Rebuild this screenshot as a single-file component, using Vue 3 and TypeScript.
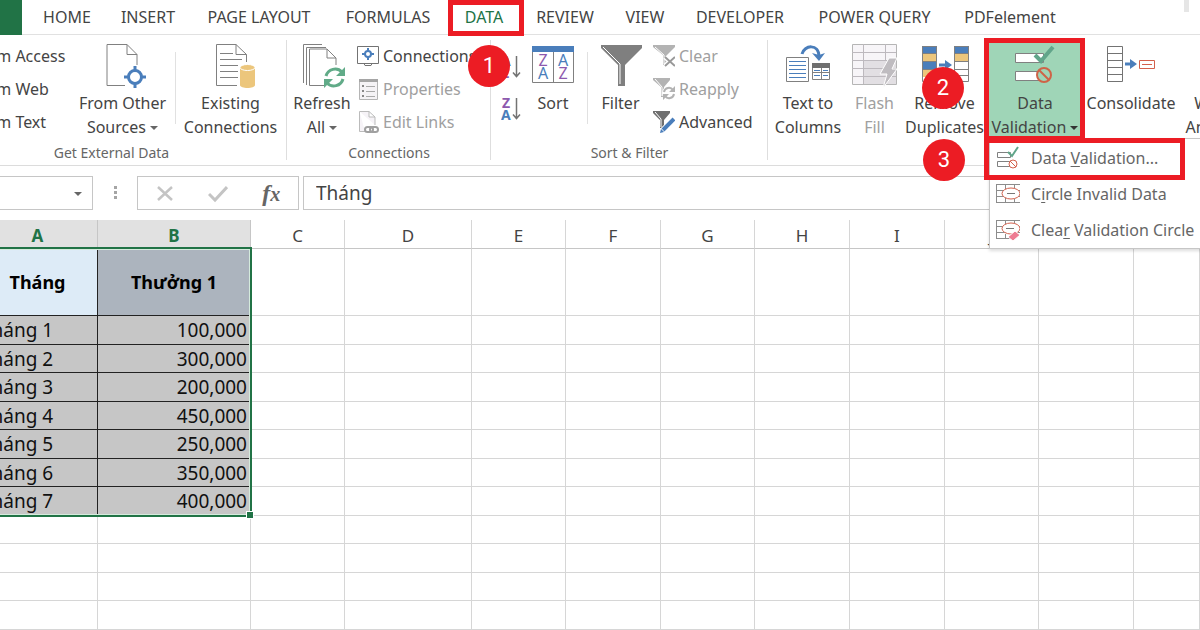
<script setup lang="ts">
import { ref } from 'vue'

const tabs: string[] = ['HOME', 'INSERT', 'PAGE LAYOUT', 'FORMULAS', 'DATA', 'REVIEW', 'VIEW', 'DEVELOPER', 'POWER QUERY', 'PDFelement']
const activeTab = ref('DATA')
const formula = ref('Tháng')
const cellName = ref('')

const columns: string[] = ['A', 'B', 'C', 'D', 'E', 'F', 'G', 'H', 'I', 'J', 'K', 'L']
const blanks = columns.slice(2)

interface Row { month: string; bonus: string }
const rows: Row[] = [
  { month: 'Tháng 1', bonus: '100,000' },
  { month: 'Tháng 2', bonus: '300,000' },
  { month: 'Tháng 3', bonus: '200,000' },
  { month: 'Tháng 4', bonus: '450,000' },
  { month: 'Tháng 5', bonus: '250,000' },
  { month: 'Tháng 6', bonus: '350,000' },
  { month: 'Tháng 7', bonus: '400,000' },
]
</script>

<template>
  <div class="excel">
    <header class="tabbar">
      <button class="file" type="button" aria-label="File"></button>
      <nav class="tabs">
        <button v-for="tab in tabs" :key="tab" type="button" class="tab" :class="{ active: tab === activeTab }" @click="activeTab = tab">{{ tab }}</button>
      </nav>
      <span class="grip"></span>
    </header>

    <section class="ribbon">
      <div class="group external">
        <div class="tools">
          <div class="stack sources">
            <button type="button" class="small">From Access</button>
            <button type="button" class="small">From Web</button>
            <button type="button" class="small">From Text</button>
          </div>
          <button type="button" class="big other">
            <svg width="48" height="48" viewBox="0 0 48 48" fill="none">
              <path d="M8 1.500H28L38 11.500V22M28 1.500V11.500H38M8 1.500V42.500H26" stroke="#808080" />
              <circle cx="36" cy="34" r="6.500" stroke="#4a7ebb" stroke-width="3" />
              <path d="M36 23v5M36 40v5M25 34h5M42 34h5" stroke="#4a7ebb" stroke-width="3" />
            </svg>
            <span>From Other</span><span>Sources <i class="caret"></i></span>
          </button>
          <span class="divider"></span>
          <button type="button" class="big existing">
            <svg width="48" height="48" viewBox="0 0 48 48" fill="none">
              <path d="M9.500 1.500H29L39.500 11.500V19M29 1.500V11.500H39.500M9.500 1.500V42.500H30" stroke="#808080" />
              <path d="M13 10.500h13M13 16.500h22M13 22.500h18M13 28.500h18M13 34.500h18" stroke="#808080" />
              <path d="M33 25v17c0 4 15 4 15 0V25z" fill="#ecc67c" />
              <ellipse cx="40.500" cy="24.500" rx="7.500" ry="3" fill="#ecc67c" stroke="#fff" />
            </svg>
            <span>Existing</span><span>Connections</span>
          </button>
        </div>
        <h2>Get External Data</h2>
      </div>

      <div class="group connections">
        <div class="tools">
          <button type="button" class="big refresh">
            <svg width="48" height="48" viewBox="0 0 48 48" fill="none">
              <path d="M5.500 40V1.500H24M8.500 42V4.500H28M11.500 42.500V6H29L38 15V22M29 6V15H38M11.500 42.500H27" stroke="#808080" />
              <path d="M28 33a9.500 9.500 0 0 1 16-4M45 36a9.500 9.500 0 0 1-16 4" stroke="#61ab88" stroke-width="3" />
              <path d="M47 24v9h-9zM26 45v-9h9z" fill="#61ab88" />
            </svg>
            <span>Refresh</span><span>All <i class="caret"></i></span>
          </button>
          <div class="stack">
            <button type="button" class="small">
              <svg width="22" height="22" viewBox="0 0 22 22" fill="none">
                <path d="M.500 1.500h21v17H15l-1 2H8l-1-2H.500zM7 18.500h8" stroke="#737373" />
                <circle cx="11" cy="9" r="3" stroke="#4a7ebb" stroke-width="2" />
                <path d="M11 3v3M11 12v3M5 9h3M14 9h3" stroke="#4a7ebb" stroke-width="2" />
              </svg>Connections
            </button>
            <button type="button" class="small off">
              <svg width="22" height="22" viewBox="0 0 22 22" fill="none">
                <path d="M2.500 1.500h18v20h-18z" stroke="#b5b5b5" fill="#f5f3f6" /><path d="M2 1h19v3H2z" fill="#a5a5a5" />
                <path d="M5 8h2M5 13h2M5 18h2" stroke="#888" stroke-width="2" /><path d="M9 8.500h9M9 13.500h9M9 18.500h9" stroke="#aaa" />
              </svg>Properties
            </button>
            <button type="button" class="small off">
              <svg width="22" height="22" viewBox="0 0 22 22" fill="none">
                <path d="M2.500.500H12L18 6V14M12 .500V6H18M2.500.500V20.500H8" stroke="#bbb" fill="#f6f3f7" />
                <rect x="8" y="16" width="8" height="5" rx="2.500" stroke="#a0a0a0" stroke-width="2" />
                <rect x="13" y="16" width="8" height="5" rx="2.500" stroke="#a0a0a0" stroke-width="2" />
              </svg>Edit Links
            </button>
          </div>
        </div>
        <h2>Connections</h2>
      </div>

      <div class="group sorting">
        <div class="tools">
          <div class="orders">
            <button type="button" aria-label="Sort A to Z">
              <svg width="20" height="28" viewBox="0 0 20 28" fill="none" class="letters">
                <text x="0" y="13" fill="#4a7ebb">A</text><text x="0" y="25" fill="#8d59ae">Z</text>
                <path d="M15.500 3v20M12 19.500l3.500 4 3.500-4" stroke="#737373" stroke-width="1.500" />
              </svg>
            </button>
            <button type="button" aria-label="Sort Z to A">
              <svg width="20" height="28" viewBox="0 0 20 28" fill="none" class="letters">
                <text x="1" y="13" fill="#8d59ae">Z</text><text x="0" y="25" fill="#4a7ebb">A</text>
                <path d="M15.500 3v20M12 19.500l3.500 4 3.500-4" stroke="#737373" stroke-width="1.500" />
              </svg>
            </button>
          </div>
          <button type="button" class="big sort">
            <svg width="48" height="48" viewBox="0 0 48 48" fill="none" class="cards">
              <path d="M3.500 4v35.500h41V4M24.500 8v31" stroke="#808080" /><path d="M3 3h42v6H3z" fill="#4a7ebb" />
              <text x="14" y="23" fill="#8d59ae">Z</text><text x="14" y="36" fill="#4a7ebb">A</text>
              <text x="34" y="23" fill="#4a7ebb">A</text><text x="34" y="36" fill="#8d59ae">Z</text>
            </svg>
            <span>Sort</span>
          </button>
          <span class="divider"></span>
          <button type="button" class="big filter">
            <svg width="48" height="48" viewBox="0 0 48 48">
              <path d="M4 2h41v3L28 22v21h-7V22L4 5z" fill="#7f7f7f" />
              <path d="M6 4l17 17v20" fill="none" stroke="#fff" />
            </svg>
            <span>Filter</span>
          </button>
          <div class="stack">
            <button type="button" class="small off">
              <svg width="22" height="22" viewBox="0 0 22 22">
                <path d="M0 0h22v2l-8 8v10h-4V10L0 2z" fill="#b3b3b3" /><path d="M2 2l9 8v9" fill="none" stroke="#fff" />
                <path d="M12 12l10 9M22 12l-10 9" stroke="#fff" stroke-width="5" /><path d="M12 12l10 9M22 12l-10 9" stroke="#999" stroke-width="2" />
              </svg>Clear
            </button>
            <button type="button" class="small off">
              <svg width="22" height="22" viewBox="0 0 22 22" fill="none">
                <path d="M0 0h17v2l-6 7v10H8V9L0 2z" fill="#b3b3b3" /><path d="M2 1l7 8v9" stroke="#fff" />
                <circle cx="16" cy="15" r="7" fill="#fff" />
                <path d="M11 14a5 5 0 0 1 9-2M21 16a5 5 0 0 1-9 2" stroke="#b3b3b3" stroke-width="2" /><path d="M22 8v6h-6zM10 22v-6h6z" fill="#b3b3b3" />
              </svg>Reapply
            </button>
            <button type="button" class="small">
              <svg width="22" height="22" viewBox="0 0 22 22" fill="none">
                <path d="M0 0h17v2l-6 7v8H7V9L0 2z" fill="#6f6f6f" /><path d="M2 1l6 7v8" stroke="#fff" />
                <path d="M21 8L9 20" stroke="#fff" stroke-width="6" /><path d="M21 8L10 19" stroke="#4a7ebb" stroke-width="4" /><path d="M8 18l3 3-4 1z" fill="#4a7ebb" />
              </svg>Advanced
            </button>
          </div>
        </div>
        <h2>Sort &amp; Filter</h2>
      </div>

      <div class="group datatools">
        <div class="tools">
          <button type="button" class="big columns">
            <svg width="48" height="48" viewBox="0 0 48 48" fill="none">
              <path d="M2.500 14.500h22v24h-22z" stroke="#808080" /><path d="M5 18.500h17M5 22.500h17M5 26.500h17M5 30.500h17M5 34.500h17" stroke="#4a7ebb" />
              <path d="M28.500 21.500h17v15h-17zM28 29.500h18M37.500 25v12" stroke="#808080" /><path d="M28 20h18v5H28z" fill="#6f6f6f" />
              <path d="M30 27.500h6M39 27.500h5M30 32.500h6M39 32.500h5" stroke="#4a7ebb" />
              <path d="M18 11c2-9 17-11 17 3" stroke="#4a7ebb" stroke-width="3" /><path d="M28 10l7 8 6-8-6 2z" fill="#4a7ebb" />
            </svg>
            <span>Text to</span><span>Columns</span>
          </button>
          <button type="button" class="big flash off">
            <svg width="48" height="48" viewBox="0 0 48 48" fill="none">
              <path d="M1.500 1.500h44v40h-44z" fill="#f7f5f8" stroke="#b5b5b5" />
              <path d="M12 17h33v24H12z" fill="#e2dfe3" />
              <path d="M1 9.500h44M1 17.500h44M1 25.500h44M1 33.500h44M12.500 1v40M34.500 1v16" stroke="#bdb9be" />
              <path d="M38 15h8l-5 11h5L32 45l4-14h-7z" fill="#bfbcc0" stroke="#fff" />
            </svg>
            <span>Flash</span><span>Fill</span>
          </button>
          <button type="button" class="big duplicates">
            <svg width="48" height="48" viewBox="0 0 48 48" fill="none">
              <path d="M1 3h15v8H1zM1 19h15v8H1zM33 3h15v8H33z" fill="#4a7ebb" /><path d="M1 11h15v7H1zM1 27h15v7H1zM33 11h15v7H33z" fill="#ecc67c" />
              <path d="M1.500 3.500h14v35h-14zM33.500 3.500h14v35h-14zM33 18.500h15M33 26.500h15M33 32.500h15M1 10.500h15M1 18.500h15M1 26.500h15M33 10.500h15" stroke="#808080" />
              <path d="M18 22h9" stroke="#4a7ebb" stroke-width="3" /><path d="M24 17l7 5-7 5z" fill="#4a7ebb" />
            </svg>
            <span>Remove</span><span>Duplicates</span>
          </button>
          <button type="button" class="big validation">
            <svg width="48" height="48" viewBox="0 0 48 48" fill="none">
              <path d="M4.500 10.500h28v9h-28zM4.500 28.500h28v9h-28z" fill="#fff" stroke="#808080" />
              <path d="M24 12l6 6L42 4" stroke="#61a58a" stroke-width="4" />
              <circle cx="33" cy="32" r="7" fill="#9fd5b7" stroke="#cf6347" stroke-width="2" /><path d="M28 27l10 10" stroke="#cf6347" stroke-width="2" />
            </svg>
            <span>Data</span><span>Validation <i class="caret"></i></span>
          </button>
          <button type="button" class="big consolidate">
            <svg width="48" height="48" viewBox="0 0 48 48" fill="none">
              <path d="M.500 3.500h15v35h-15zM0 10.500h16M0 17.500h16M0 24.500h16M0 31.500h16" stroke="#737373" />
              <path d="M18 21h7" stroke="#4a7ebb" stroke-width="3" /><path d="M23 16l7 5-7 5z" fill="#4a7ebb" />
              <path d="M32.500 17.500h15v8h-15zM35 21.500h10" stroke="#d3604c" />
            </svg>
            <span>Consolidate</span>
          </button>
          <button type="button" class="big whatif">
            <svg width="48" height="48" viewBox="0 0 48 48"></svg>
            <span>What-If</span><span>Analysis <i class="caret"></i></span>
          </button>
        </div>
      </div>
    </section>

    <section class="formulabar">
      <div class="namebox">
        <input v-model="cellName" type="text" aria-label="Name box" />
        <button type="button" aria-label="Open name list"><i class="caret"></i></button>
      </div>
      <svg class="dots" width="44" height="34" viewBox="0 0 44 34" fill="#a5a5a5"><path d="M21 10h3v3h-3zM21 15h3v3h-3zM21 20h3v3h-3z" /></svg>
      <div class="editing">
        <button type="button" aria-label="Cancel"><svg width="20" height="20" viewBox="0 0 20 20"><path d="M3 4l14 13M17 4L3 17" stroke="#c4c4c4" stroke-width="2.500" /></svg></button>
        <button type="button" aria-label="Enter"><svg width="20" height="20" viewBox="0 0 20 20"><path d="M1 11l6 6L19 4" fill="none" stroke="#c4c4c4" stroke-width="3" /></svg></button>
        <button type="button" class="fx" aria-label="Insert function">f<small>x</small></button>
      </div>
      <input v-model="formula" class="formula" type="text" aria-label="Formula" />
    </section>

    <main class="sheet">
      <table>
        <colgroup><col v-for="c in columns" :key="c" :class="'col-' + c" /></colgroup>
        <thead>
          <tr><th v-for="(c, i) in columns" :key="c" scope="col" :class="{ picked: i < 2 }">{{ c }}</th></tr>
        </thead>
        <tbody>
          <tr class="title"><td class="month">Tháng</td><td class="bonus">Thưởng 1</td><td v-for="b in blanks" :key="b"></td></tr>
          <tr v-for="row in rows" :key="row.month" class="data"><td class="month">{{ row.month }}</td><td class="bonus">{{ row.bonus }}</td><td v-for="b in blanks" :key="b"></td></tr>
          <tr v-for="n in 4" :key="n"><td v-for="c in columns" :key="c"></td></tr>
        </tbody>
      </table>
      <div class="selection"><i></i></div>
    </main>

    <div class="menu" role="menu">
      <button type="button" role="menuitem">
        <svg width="24" height="24" viewBox="0 0 24 24" fill="none">
          <path d="M1.500 6.500h13v5h-13zM1.500 15.500h13v5h-13z" stroke="#808080" fill="#fff" /><path d="M12 6l4 4L22 1" stroke="#61a58a" stroke-width="2" />
          <circle cx="17" cy="18" r="4" fill="#fff" stroke="#d3604c" /><path d="M14 15l6 6" stroke="#d3604c" />
        </svg><span>Data <u>V</u>alidation...</span>
      </button>
      <button type="button" role="menuitem">
        <svg width="24" height="24" viewBox="0 0 24 24" fill="none">
          <path d="M.500 2v19M0 2.500h24M0 8.500h24M0 14.500h24M0 20.500h24M9.500 2v5M18.500 2v5M9.500 16v5M18.500 16v5" stroke="#8c8c8c" />
          <ellipse cx="15" cy="11.500" rx="9" ry="5.500" fill="#fff" stroke="#d3604c" /><path d="M11 11.500h8" stroke="#777" />
        </svg><span>C<u>i</u>rcle Invalid Data</span>
      </button>
      <button type="button" role="menuitem">
        <svg width="24" height="24" viewBox="0 0 24 24" fill="none">
          <path d="M.500 2v19M0 2.500h24M0 8.500h24M0 14.500h24M0 20.500h15M9.500 2v5M18.500 2v5M9.500 16v5" stroke="#8c8c8c" />
          <ellipse cx="15" cy="10.500" rx="9" ry="5.500" fill="#fff" stroke="#d3604c" /><path d="M10 10.500h8" stroke="#777" />
          <path d="M12 19l7-6 5 4-7 6z" fill="#ee7c92" stroke="#fff" />
        </svg><span>Clea<u>r</u> Validation Circle</span>
      </button>
    </div>

    <div class="frame frame-tab"></div>
    <div class="frame frame-button"></div>
    <div class="frame frame-item"></div>
    <span class="badge badge-1">1</span>
    <span class="badge badge-2">2</span>
    <span class="badge badge-3">3</span>
  </div>
</template>

<style>
html, body { margin: 0; background: #fff; }
</style>

<style scoped>
* { box-sizing: border-box; }
.excel { position: relative; min-height: 100vh; overflow: hidden; background: #fff; color: #444; font-family: "Noto Sans", "Open Sans", sans-serif; font-size: 16px; }
button { margin: 0; padding: 0; border: 0; background: none; color: inherit; font: inherit; white-space: nowrap; }
input { font: inherit; color: inherit; outline: 0; }

.tabbar { display: flex; height: 35px; }
.file { width: 22px; flex: none; background: #217346; }
.tabs { display: grid; grid-template-columns: 78px 84px 138px 120px 72px 90px 70px 120px 149px 122px; padding-left: 6px; border-bottom: 1px solid #e1e1e1; flex: 1; }
.tab.active { color: #217346; }
.grip { width: 5px; height: 12px; margin-left: -16px; margin-right: 11px; background: #e6e6e6; }

.ribbon { display: flex; border-bottom: 1px solid #dcdcdc; height: 131px; }
.group { display: flex; flex-direction: column; flex: none; position: relative; }
.group::after { content: ""; position: absolute; right: 0; top: 5px; bottom: 5px; width: 1px; background: #dedede; }
.external { width: 351px; margin-left: -64px; }
.connections { width: 204px; }
.sorting { width: 277px; }
.datatools::after { display: none; }
.tools { display: flex; height: 106px; align-items: flex-start; }
.group h2 { margin: 0; font-size: 14px; line-height: 24px; font-weight: 400; text-align: center; color: #666; }
.big { display: flex; flex: none; flex-direction: column; align-items: center; height: 104px; padding-top: 8px; line-height: 24px; }
.off { color: #a0a0a0; }
.stack { display: flex; flex-direction: column; padding-top: 4px; }
.small { display: flex; align-items: center; gap: 4px; height: 33px; }
.sources { width: 134px; padding-left: 36px; }
.other { width: 105px; }
.existing { width: 109px; }
.refresh { width: 70px; }
.sort { width: 62px; margin-right: 3px; }
.filter { width: 65px; }
.columns { width: 80px; }
.flash { width: 53px; }
.duplicates { width: 87px; }
.validation { width: 94px; height: 99px; margin-top: 5px; padding-top: 3px; background: #9fd5b7; }
.consolidate { width: 98px; }
.whatif { width: 84px; }
.divider { width: 1px; height: 72px; margin-top: 17px; background: #e1e1e1; }
.caret { display: inline-block; border: 4px solid transparent; border-top-color: #666; border-bottom: 0; vertical-align: 3px; }
.validation .caret { border-top-color: #333; }
.orders { display: flex; flex-direction: column; gap: 14px; width: 31px; padding: 18px 0 0 10px; }
.orders button { height: 28px; text-align: left; }
.orders svg { display: block; }
.letters { font: bold 14px "Noto Sans", sans-serif; }
.cards { font: 16px "Noto Sans", sans-serif; text-anchor: middle; }

.formulabar { display: flex; align-items: stretch; height: 34px; margin-top: 10px; }
.namebox { display: flex; width: 93px; border: 1px solid #c6c6c6; border-left: 0; }
.namebox input { width: 64px; border: 0; padding: 0; }
.namebox button { flex: 1; }
.dots { flex: none; }
.editing { display: grid; grid-template-columns: repeat(3, 1fr); width: 162px; border: 1px solid #c6c6c6; }
.editing svg { display: block; margin: 0 auto; }
.fx { font: italic bold 24px "Liberation Serif", serif; color: #666; }
.fx small { font-size: 20px; }
.formula { flex: 1; min-width: 0; margin-left: 4px; padding: 0 12px; border: 1px solid #c6c6c6; border-right: 0; font-size: 19px; }

.sheet { position: relative; margin: 10px 0 0 -22px; }
table { width: 100%; table-layout: fixed; border-collapse: separate; border-spacing: 0; }
.col-A { width: 120px; }
.col-B { width: 153px; }
.col-D { width: 127px; }
.col-C, .col-E, .col-G, .col-J { width: 94px; }
.col-F, .col-H, .col-I, .col-K { width: 95px; }
th { height: 29px; padding: 3px 0 0; border-right: 1px solid #d6d6d6; border-bottom: 1px solid #c6c6c6; font-size: 17px; line-height: 24px; font-weight: 400; }
th.picked { background: #e1e1e1; color: #217346; font-weight: 700; border-right-color: #c6c6c6; }
td { height: 28px; padding: 0 3px; border-right: 1px solid #d6d6d6; border-bottom: 1px solid #d6d6d6; font-size: 19px; line-height: 24px; color: #111; }
tr:nth-child(even) td { height: 29px; }
.title td { height: 67px; }
.title .month, .title .bonus { text-align: center; font-weight: 700; font-size: 18px; color: #000; }
.title .month { background: #ddebf7; }
.title .bonus { background: #acb4be; }
.month, .bonus { border-color: #222; }
.data .month, .data .bonus { background: #c6c6c6; }
.data .bonus { text-align: right; }
.selection { position: absolute; left: 0; top: 27px; width: 274px; height: 270px; border: 2px solid #217346; box-shadow: inset 0 0 0 1px #d5ebdd; }
.selection i { position: absolute; right: -4px; bottom: -4px; width: 8px; height: 8px; border: 1px solid #fff; background: #217346; }

.menu { position: absolute; top: 138px; left: 989px; right: -4px; padding-top: 1px; border: 1px solid #c6c6c6; background: #fff; box-shadow: 0 2px 3px #0002; color: #666; }
.menu button { display: flex; align-items: center; gap: 11px; height: 36px; padding-left: 6px; }
.menu u { text-underline-offset: 2px; text-decoration-thickness: 1px; }

.frame { position: absolute; border: 5px solid #ec1c24; pointer-events: none; }
.frame-tab { left: 448px; top: 0; width: 76px; height: 36px; }
.frame-button { left: 984px; top: 38px; width: 101px; height: 103px; }
.frame-item { left: 984px; top: 138px; width: 201px; height: 42px; }
.badge { position: absolute; width: 42px; height: 42px; border-radius: 50%; background: #ec1c24; color: #fff; font: 22px/42px Roboto, sans-serif; text-align: center; }
.badge-1 { left: 468px; top: 45px; }
.badge-2 { left: 922px; top: 67px; }
.badge-3 { left: 923px; top: 139px; }
</style>
